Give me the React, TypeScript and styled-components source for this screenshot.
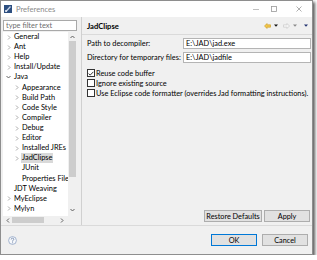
import styled, { createGlobalStyle } from 'styled-components';

const GlobalStyle = createGlobalStyle`
    html, body {
        margin: 0;
        padding: 0;
        background: #ffffff;
    }

    body {
        font-family: Lato, "Noto Sans", sans-serif;
        font-size: 7.4px;
        color: #000;
    }
`;

const Window = styled.div`
    box-sizing: border-box;
    width: 313px;
    height: 255px;
    border: 1px solid #8e8e8e;
    background: #f0f0f0;
    box-shadow: 2px 2px 3px rgba(0, 0, 0, 0.65);
    display: flex;
    flex-direction: column;
`;

const TitleBar = styled.div`
    height: 16px;
    background: #ffffff;
    display: flex;
    align-items: center;
    padding-left: 3px;
`;

const Title = styled.span`
    margin-left: 4px;
    color: #8a8a8a;
    font-size: 7.6px;
`;

const Captions = styled.div`
    margin-left: auto;
    display: flex;
    height: 100%;
`;

const Caption = styled.div<{ $width: number; $gap?: number }>`
    width: ${({ $width }) => $width}px;
    margin-left: ${({ $gap }) => $gap ?? 0}px;
    display: flex;
    align-items: center;
    justify-content: center;
`;

const Body = styled.div`
    height: 208px;
    display: flex;
`;

const LeftPane = styled.div`
    width: 80px;
    padding: 3px 0 0 2px;
    box-sizing: border-box;
    display: flex;
    flex-direction: column;
`;

const FilterInput = styled.input`
    box-sizing: border-box;
    width: 74px;
    height: 11px;
    margin: 0;
    padding: 0 0 0 2px;
    border: 1px solid #a9a9a9;
    background: #fff;
    font: inherit;
    outline: none;

    &::placeholder {
        color: #6e6e6e;
    }
`;

const TreeFrame = styled.div`
    margin-top: 1px;
    width: 74px;
    display: grid;
    grid-template-columns: 65px 9px;
    grid-template-rows: 184px 8px;
`;

const TreeList = styled.div`
    background: #fff;
    overflow: hidden;
`;

const TreeRow = styled.div<{ $level: number }>`
    height: 10.12px;
    display: flex;
    align-items: center;
    padding-left: ${({ $level }) => 3 + $level * 8}px;
    white-space: nowrap;
`;

const Twisty = styled.span`
    width: 5px;
    height: 5px;
    margin-right: 3px;
    flex: none;
    display: flex;
    align-items: center;
    justify-content: center;
`;

const TreeLabel = styled.span<{ $selected?: boolean }>`
    margin-left: -1px;
    padding: 0 1px;
    line-height: 10px;
    background: ${({ $selected }) => ($selected ? '#d9d9d9' : 'transparent')};
`;

const VScroll = styled.div`
    background: #f0f0f0;
    display: flex;
    flex-direction: column;
    align-items: center;
`;

const ScrollArrow = styled.div<{ $end?: boolean }>`
    height: 9px;
    display: flex;
    align-items: center;
    justify-content: center;
    margin-top: ${({ $end }) => ($end ? 'auto' : '0')};
    margin-bottom: ${({ $end }) => ($end ? '2px' : '0')};
`;

const VThumb = styled.div`
    width: 7px;
    height: 136px;
    background: #cdcdcd;
`;

const HScroll = styled.div`
    background: #f0f0f0;
    display: flex;
    align-items: center;
    padding: 0 4px 0 3px;
`;

const HThumb = styled.div`
    width: 32px;
    height: 6px;
    margin-left: 2px;
    margin-right: auto;
    background: #cdcdcd;
`;

const Corner = styled.div`
    background: #f0f0f0;
`;

const RightPane = styled.div`
    flex: 1;
    border-left: 1px solid #d0d0d0;
    display: flex;
    flex-direction: column;
`;

const PageHeader = styled.div`
    height: 17px;
    border-bottom: 1px solid #dadada;
    display: flex;
    align-items: center;
    padding: 0 4px 0 5px;
`;

const PageTitle = styled.span`
    font-weight: 700;
    font-size: 7.6px;
`;

const NavGroup = styled.div`
    margin-left: auto;
    display: flex;
    align-items: center;
    gap: 3px;
`;

const NavIcon = styled.svg<{ $space?: number }>`
    margin-left: ${({ $space }) => $space ?? 0}px;
`;

const Form = styled.div`
    padding: 3px 1px 0 5px;
    display: flex;
    flex-direction: column;
`;

const FieldRow = styled.div`
    display: grid;
    grid-template-columns: 96px 1fr;
    align-items: center;
    height: 11px;
    margin-bottom: 3px;
`;

const TextField = styled.div`
    box-sizing: border-box;
    height: 11px;
    border: 1px solid #b4b4b4;
    background: #fff;
    padding-left: 2px;
    line-height: 9px;
`;

const CheckList = styled.div`
    margin-top: 2px;
    display: flex;
    flex-direction: column;
`;

const CheckRow = styled.label`
    height: 10px;
    display: flex;
    align-items: center;
    white-space: nowrap;
`;

const CheckBox = styled.span`
    box-sizing: border-box;
    width: 8px;
    height: 8px;
    border: 1px solid #333;
    background: #fff;
    margin-right: 1px;
    display: flex;
    align-items: center;
    justify-content: center;
`;

const PageButtons = styled.div`
    margin-top: auto;
    display: flex;
    justify-content: flex-end;
    gap: 2px;
    padding: 0 2px 3px 0;
`;

const Button = styled.div<{ $width: number; $default?: boolean }>`
    box-sizing: border-box;
    width: ${({ $width }) => $width}px;
    height: 12px;
    border: 1px solid ${({ $default }) => ($default ? '#0078d7' : '#adadad')};
    background: #e1e1e1;
    display: flex;
    align-items: center;
    justify-content: center;
    font-size: 7.3px;
`;

const Footer = styled.div`
    flex: 1;
    border-top: 1px solid #dadada;
    display: flex;
    align-items: center;
    padding: 0 4px 0 7px;
`;

const DialogButtons = styled.div`
    margin-left: auto;
    display: flex;
    gap: 5px;
`;

type Node = { label: string; level: number; twisty?: 'closed' | 'open'; selected?: boolean };

const tree: Node[] = [
    { label: 'General', level: 0, twisty: 'closed' },
    { label: 'Ant', level: 0, twisty: 'closed' },
    { label: 'Help', level: 0, twisty: 'closed' },
    { label: 'Install/Update', level: 0, twisty: 'closed' },
    { label: 'Java', level: 0, twisty: 'open' },
    { label: 'Appearance', level: 1, twisty: 'closed' },
    { label: 'Build Path', level: 1, twisty: 'closed' },
    { label: 'Code Style', level: 1, twisty: 'closed' },
    { label: 'Compiler', level: 1, twisty: 'closed' },
    { label: 'Debug', level: 1, twisty: 'closed' },
    { label: 'Editor', level: 1, twisty: 'closed' },
    { label: 'Installed JREs', level: 1, twisty: 'closed' },
    { label: 'JadClipse', level: 1, twisty: 'closed', selected: true },
    { label: 'JUnit', level: 1 },
    { label: 'Properties File', level: 1 },
    { label: 'JDT Weaving', level: 0 },
    { label: 'MyEclipse', level: 0, twisty: 'closed' },
    { label: 'Mylyn', level: 0, twisty: 'closed' },
];

function TwistyIcon({ kind }: { kind?: 'closed' | 'open' }) {
    if (!kind) return null;
    return kind === 'open' ? (
        <svg width="5" height="4" viewBox="0 0 5 4">
            <polyline points="0.5,1 2.5,3 4.5,1" fill="none" stroke="#555" strokeWidth="0.9" />
        </svg>
    ) : (
        <svg width="4" height="5" viewBox="0 0 4 5">
            <polyline points="1,0.5 3,2.5 1,4.5" fill="none" stroke="#a0a0a0" strokeWidth="0.9" />
        </svg>
    );
}

function Arrow({ dir }: { dir: 'up' | 'down' | 'left' | 'right' }) {
    const pts = {
        up: '0.5,3 2.5,1 4.5,3',
        down: '0.5,1 2.5,3 4.5,1',
        left: '3,0.5 1,2.5 3,4.5',
        right: '1,0.5 3,2.5 1,4.5',
    }[dir];
    const horiz = dir === 'left' || dir === 'right';
    return (
        <svg width={horiz ? 4 : 5} height={horiz ? 5 : 4} viewBox={horiz ? '0 0 4 5' : '0 0 5 4'}>
            <polyline points={pts} fill="none" stroke="#606060" strokeWidth="1" />
        </svg>
    );
}

function Drop({ color, space }: { color: string; space?: number }) {
    return (
        <NavIcon $space={space} width="4" height="3" viewBox="0 0 4 3">
            <polygon points="0,0.5 4,0.5 2,2.8" fill={color} />
        </NavIcon>
    );
}

export default function App() {
    return (
        <>
            <GlobalStyle />
            <Window>
                <TitleBar>
                    <svg width="8" height="8" viewBox="0 0 8 8">
                        <rect width="8" height="8" fill="#2d4f80" />
                        <line x1="2" y1="6.5" x2="6.5" y2="1.5" stroke="#c9d6ea" strokeWidth="1.2" />
                        <circle cx="2" cy="6" r="1" fill="#e8eef7" />
                    </svg>
                    <Title>Preferences</Title>
                    <Captions>
                        <Caption $width={18}>
                            <svg width="6" height="1" viewBox="0 0 6 1">
                                <rect width="6" height="0.8" fill="#b0b0b0" />
                            </svg>
                        </Caption>
                        <Caption $width={18}>
                            <svg width="6" height="6" viewBox="0 0 6 6">
                                <rect x="0.5" y="0.5" width="5" height="5" fill="none" stroke="#9a9a9a" strokeWidth="0.8" />
                            </svg>
                        </Caption>
                        <Caption $width={26} $gap={3}>
                            <svg width="6" height="6" viewBox="0 0 6 6">
                                <path d="M0.5 0.5 L5.5 5.5 M5.5 0.5 L0.5 5.5" stroke="#9a9a9a" strokeWidth="0.8" />
                            </svg>
                        </Caption>
                    </Captions>
                </TitleBar>

                <Body>
                    <LeftPane>
                        <FilterInput placeholder="type filter text" readOnly />
                        <TreeFrame>
                            <TreeList>
                                {tree.map((node) => (
                                    <TreeRow key={node.label} $level={node.level}>
                                        <Twisty>
                                            <TwistyIcon kind={node.twisty} />
                                        </Twisty>
                                        <TreeLabel $selected={node.selected}>{node.label}</TreeLabel>
                                    </TreeRow>
                                ))}
                            </TreeList>
                            <VScroll>
                                <ScrollArrow>
                                    <Arrow dir="up" />
                                </ScrollArrow>
                                <VThumb />
                                <ScrollArrow $end>
                                    <Arrow dir="down" />
                                </ScrollArrow>
                            </VScroll>
                            <HScroll>
                                <Arrow dir="left" />
                                <HThumb />
                                <Arrow dir="right" />
                            </HScroll>
                            <Corner />
                        </TreeFrame>
                    </LeftPane>

                    <RightPane>
                        <PageHeader>
                            <PageTitle>JadClipse</PageTitle>
                            <NavGroup>
                                <NavIcon width="7" height="6" viewBox="0 0 7 6">
                                    <path d="M0.5 3 L3 0.5 L3 1.8 L6.5 1.8 L6.5 4.2 L3 4.2 L3 5.5 Z" fill="#f3c64a" stroke="#c99a1e" strokeWidth="0.6" />
                                </NavIcon>
                                <Drop color="#111" />
                                <NavIcon $space={2} width="7" height="6" viewBox="0 0 7 6">
                                    <path d="M6.5 3 L4 0.5 L4 1.8 L0.5 1.8 L0.5 4.2 L4 4.2 L4 5.5 Z" fill="#f4f4f4" stroke="#c4c4c4" strokeWidth="0.6" />
                                </NavIcon>
                                <Drop color="#8a8a8a" />
                                <Drop color="#1f2f6e" space={4} />
                            </NavGroup>
                        </PageHeader>

                        <Form>
                            <FieldRow>
                                <span>Path to decompiler:</span>
                                <TextField>E:\JAD\jad.exe</TextField>
                            </FieldRow>
                            <FieldRow>
                                <span>Directory for temporary files:</span>
                                <TextField>E:\JAD\jadfile</TextField>
                            </FieldRow>
                            <CheckList>
                                <CheckRow>
                                    <CheckBox>
                                        <svg width="6" height="5" viewBox="0 0 6 5">
                                            <polyline points="0.6,2.6 2.2,4.1 5.4,0.8" fill="none" stroke="#222" strokeWidth="0.9" />
                                        </svg>
                                    </CheckBox>
                                    Reuse code buffer
                                </CheckRow>
                                <CheckRow>
                                    <CheckBox />
                                    Ignore existing source
                                </CheckRow>
                                <CheckRow>
                                    <CheckBox />
                                    Use Eclipse code formatter (overrides Jad formatting instructions).
                                </CheckRow>
                            </CheckList>
                        </Form>

                        <PageButtons>
                            <Button $width={58}>Restore Defaults</Button>
                            <Button $width={46}>Apply</Button>
                        </PageButtons>
                    </RightPane>
                </Body>

                <Footer>
                    <svg width="9" height="9" viewBox="0 0 9 9">
                        <circle cx="4.5" cy="4.5" r="3.9" fill="#f7f9fc" stroke="#8fa3c4" strokeWidth="0.8" />
                        <path d="M3.2 3.5 Q3.2 2.2 4.5 2.2 Q5.8 2.2 5.8 3.4 Q5.8 4.2 4.6 4.7 L4.6 5.6" fill="none" stroke="#6d81a6" strokeWidth="0.8" />
                        <circle cx="4.6" cy="6.7" r="0.5" fill="#6d81a6" />
                    </svg>
                    <DialogButtons>
                        <Button $width={46} $default>OK</Button>
                        <Button $width={46}>Cancel</Button>
                    </DialogButtons>
                </Footer>
            </Window>
        </>
    );
}
